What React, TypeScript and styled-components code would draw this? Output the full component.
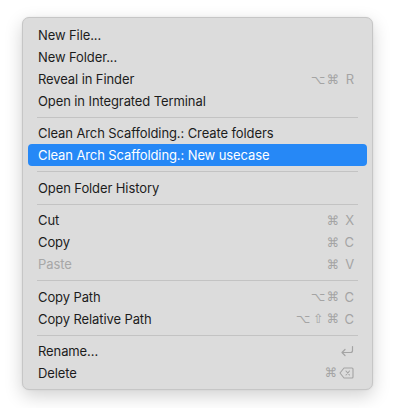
import React from "react";
import styled, { createGlobalStyle } from "styled-components";

const GlobalStyle = createGlobalStyle`
    html, body {
        margin: 0;
        background: #ffffff;
    }
    body {
        font-family: Inter, "Noto Sans", "DejaVu Sans", sans-serif;
        -webkit-font-smoothing: antialiased;
    }
`;

const Page = styled.div`
    padding: 17px 0 0 22px;
    height: 408px;
    box-sizing: border-box;
`;

const Menu = styled.div`
    width: 351px;
    box-sizing: border-box;
    padding: 6px 5px 5px;
    background: #dcdcdc;
    border: 1px solid #c6c6c6;
    border-radius: 7px;
    box-shadow: 0 6px 18px rgba(0, 0, 0, 0.18), 0 0 2px rgba(0, 0, 0, 0.08);
    display: flex;
    flex-direction: column;
`;

const Item = styled.div<{ $active?: boolean; $disabled?: boolean }>`
    height: 22px;
    display: flex;
    align-items: center;
    justify-content: space-between;
    padding: 0 13px 0 10px;
    border-radius: 4px;
    font-size: 13px;
    letter-spacing: -0.1px;
    color: ${(p) => (p.$active ? "#ffffff" : p.$disabled ? "#a7a7a7" : "#1c1c1c")};
    background: ${(p) => (p.$active ? "#2688f6" : "transparent")};
`;

const Label = styled.span`
    white-space: nowrap;
`;

const Shortcut = styled.span<{ $active?: boolean }>`
    display: flex;
    align-items: center;
    gap: 1px;
    color: ${(p) => (p.$active ? "#ffffff" : "#a4a4a4")};
    font-size: 13px;
    white-space: nowrap;
`;

const Key = styled.span`
    font-family: "DejaVu Sans", sans-serif;
    font-size: 12.5px;
    width: 14px;
    text-align: center;
`;

const Letter = styled.span`
    width: 13px;
    text-align: right;
`;

const Separator = styled.div`
    height: 1px;
    background: #c3c3c3;
    margin: 5px 9px 4.4px;
`;

const ReturnIcon = () => (
    <svg width="14" height="12" viewBox="0 0 14 12" fill="none">
        <path
            d="M12.5 1.5V5.5C12.5 6.6 11.6 7.5 10.5 7.5H2M2 7.5L5 4.5M2 7.5L5 10.5"
            stroke="#a4a4a4"
            strokeWidth="1.2"
            strokeLinecap="round"
            strokeLinejoin="round"
        />
    </svg>
);

const DeleteIcon = () => (
    <svg width="15" height="12" viewBox="0 0 15 12" fill="none">
        <path
            d="M5 1H13C13.6 1 14 1.4 14 2V10C14 10.6 13.6 11 13 11H5L1 6Z"
            stroke="#a4a4a4"
            strokeWidth="1.1"
            strokeLinejoin="round"
        />
        <path d="M7 4L10.5 8M10.5 4L7 8" stroke="#a4a4a4" strokeWidth="1.1" strokeLinecap="round" />
    </svg>
);

type Entry =
    | { sep: true }
    | { sep?: false; label: string; keys?: string[]; letter?: string; icon?: "return" | "delete"; active?: boolean; disabled?: boolean };

const entries: Entry[] = [
    { label: "New File..." },
    { label: "New Folder..." },
    { label: "Reveal in Finder", keys: ["⌥", "⌘"], letter: "R" },
    { label: "Open in Integrated Terminal" },
    { sep: true },
    { label: "Clean Arch Scaffolding.: Create folders" },
    { label: "Clean Arch Scaffolding.: New usecase", active: true },
    { sep: true },
    { label: "Open Folder History" },
    { sep: true },
    { label: "Cut", keys: ["⌘"], letter: "X" },
    { label: "Copy", keys: ["⌘"], letter: "C" },
    { label: "Paste", keys: ["⌘"], letter: "V", disabled: true },
    { sep: true },
    { label: "Copy Path", keys: ["⌥", "⌘"], letter: "C" },
    { label: "Copy Relative Path", keys: ["⌥", "⇧", "⌘"], letter: "C" },
    { sep: true },
    { label: "Rename...", icon: "return" },
    { label: "Delete", keys: ["⌘"], icon: "delete" },
];

const App = () => {
    return (
        <Page>
            <GlobalStyle />
            <Menu>
                {entries.map((e, i) =>
                    e.sep ? (
                        <Separator key={i} />
                    ) : (
                        <Item key={i} $active={e.active} $disabled={e.disabled}>
                            <Label>{e.label}</Label>
                            {(e.keys || e.icon) && (
                                <Shortcut $active={e.active}>
                                    {e.keys?.map((k, j) => (
                                        <Key key={j}>{k}</Key>
                                    ))}
                                    {e.letter && <Letter>{e.letter}</Letter>}
                                    {e.icon === "return" && <ReturnIcon />}
                                    {e.icon === "delete" && <DeleteIcon />}
                                </Shortcut>
                            )}
                        </Item>
                    )
                )}
            </Menu>
        </Page>
    );
};

export default App;
